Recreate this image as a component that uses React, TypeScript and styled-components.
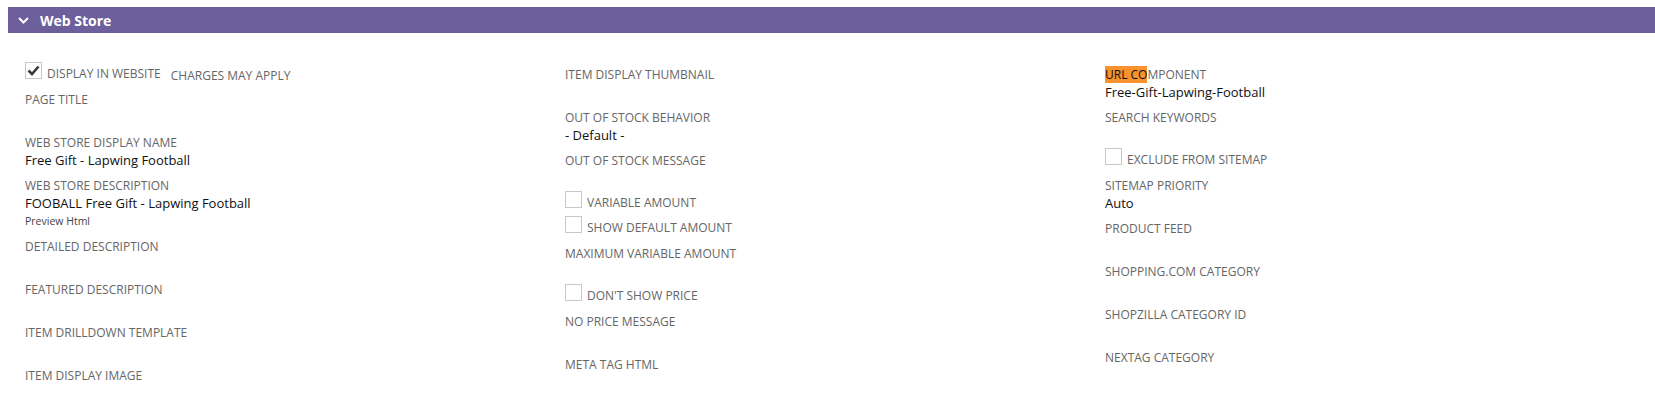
import React from "react";
import styled, { createGlobalStyle } from "styled-components";

const GlobalStyle = createGlobalStyle`
  body {
    margin: 7px 0 0 8px;
    background: #fff;
    font-family: "Open Sans", "Liberation Sans", sans-serif;
  }
`;

const Section = styled.section`
  width: 100%;
`;

const Header = styled.div`
  display: flex;
  align-items: center;
  height: 26px;
  padding-left: 10px;
  gap: 11px;
  background: #6d5f9b;
  color: #fff;
  font-size: 14px;
  font-weight: 700;
`;

const Chevron = styled.svg`
  width: 11px;
  height: 7px;
`;

const Body = styled.div`
  display: grid;
  grid-template-columns: repeat(3, 540px);
  padding: 33px 0 0 17px;
`;

const Column = styled.div`
  display: flex;
  flex-direction: column;
`;

const Field = styled.div<{ $extra?: number }>`
  display: flex;
  flex-direction: column;
  height: ${(p) => 43 + (p.$extra ?? 0)}px;
`;

const Label = styled.div`
  font-size: 12px;
  line-height: 17px;
  color: #666;
  text-transform: uppercase;
  white-space: nowrap;
`;

const Mark = styled.span`
  background: #f7922e;
  color: #111;
`;

const Value = styled.div`
  font-size: 13px;
  line-height: 17px;
  padding-top: 1px;
  color: #111;
  white-space: nowrap;
`;

const Small = styled.div`
  font-size: 10.5px;
  line-height: 18px;
  color: #444;
`;

const CheckRow = styled.div`
  display: flex;
  align-items: flex-start;
  height: 25px;
`;

const Box = styled.span`
  box-sizing: border-box;
  display: flex;
  align-items: center;
  justify-content: center;
  width: 17px;
  height: 17px;
  margin-top: -4px;
  border: 1px solid #c8c8c8;
  background: #fff;
`;

const CheckText = styled(Label)`
  margin: -1px 0 0 5px;
`;

const Aside = styled(Label)`
  margin: 1px 0 0 10px;
`;

function Check({ label, checked, aside }: { label: string; checked?: boolean; aside?: string }) {
  return (
    <CheckRow>
      <Box>
        {checked && (
          <svg width="13" height="11" viewBox="0 0 13 11">
            <path d="M1.5 5.5 L5 9 L11.5 1.5" fill="none" stroke="#3a3a3a" strokeWidth="2.6" />
          </svg>
        )}
      </Box>
      <CheckText>{label}</CheckText>
      {aside && <Aside>{aside}</Aside>}
    </CheckRow>
  );
}

function Item({ label, value, extra, children }: { label: React.ReactNode; value?: string; extra?: number; children?: React.ReactNode }) {
  return (
    <Field $extra={extra}>
      <Label>{label}</Label>
      <Value>{value ?? "\u00a0"}</Value>
      {children}
    </Field>
  );
}

export default function App() {
  return (
    <>
      <GlobalStyle />
      <Section>
        <Header>
          <Chevron viewBox="0 0 11 7">
            <polyline points="1,1 5.5,5.5 10,1" fill="none" stroke="#fff" strokeWidth="2" />
          </Chevron>
          Web Store
        </Header>
        <Body>
          <Column>
            <Check label="Display in Website" checked aside="Charges may apply" />
            <Item label="Page Title" />
            <Item label="Web Store Display Name" value="Free Gift - Lapwing Football" />
            <Item label="Web Store Description" value="FOOBALL Free Gift - Lapwing Football" extra={18}>
              <Small>Preview Html</Small>
            </Item>
            <Item label="Detailed Description" />
            <Item label="Featured Description" />
            <Item label="Item Drilldown Template" />
            <Item label="Item Display Image" />
          </Column>
          <Column>
            <Item label="Item Display Thumbnail" />
            <Item label="Out of Stock Behavior" value="- Default -" />
            <Item label="Out of Stock Message" />
            <Check label="Variable Amount" />
            <Check label="Show Default Amount" />
            <Item label="Maximum Variable Amount" />
            <Check label="Don't Show Price" />
            <Item label="No Price Message" />
            <Item label="Meta Tag HTML" />
          </Column>
          <Column>
            <Item label={<><Mark>URL CO</Mark>mponent</>} value="Free-Gift-Lapwing-Football" />
            <Item label="Search Keywords" />
            <Check label="Exclude from Sitemap" />
            <Item label="Sitemap Priority" value="Auto" />
            <Item label="Product Feed" />
            <Item label="Shopping.com Category" />
            <Item label="Shopzilla Category ID" />
            <Item label="Nextag Category" />
          </Column>
        </Body>
      </Section>
    </>
  );
}
